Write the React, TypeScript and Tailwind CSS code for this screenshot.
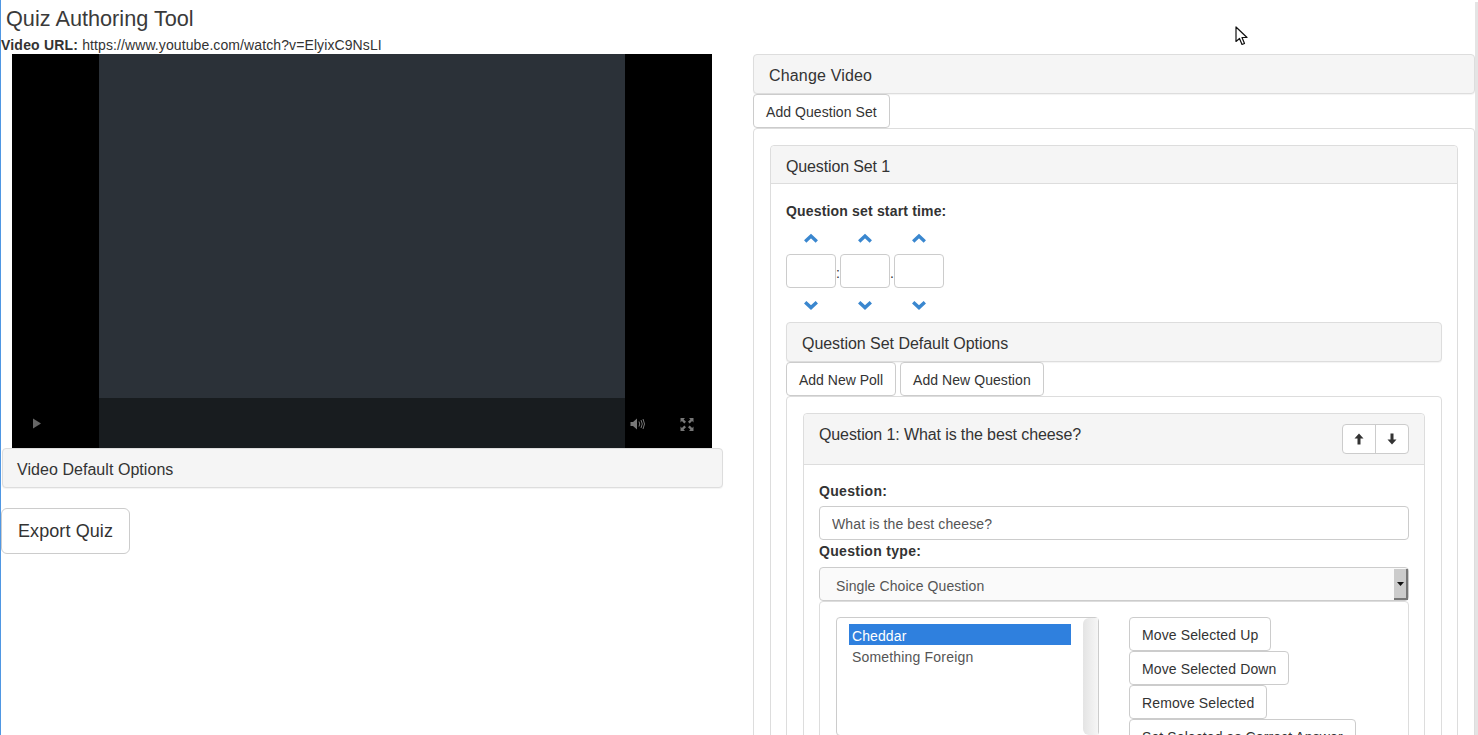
import React from 'react';

function Btn({ children, className = '' }: { children: React.ReactNode; className?: string }) {
  return (
    <button className={`h-[34px] px-3 pt-[2px] bg-white border border-[#ccc] rounded text-[14px] text-[#333] whitespace-nowrap shrink-0 ${className}`}>
      {children}
    </button>
  );
}

function PanelBar({ title, className = '' }: { title: string; className?: string }) {
  return (
    <div className={`h-10 flex items-center pt-1 bg-[#f5f5f5] border border-[#ddd] rounded text-[16px] text-[#333] shadow-[0_1px_1px_rgba(0,0,0,0.05)] ${className}`}>
      {title}
    </div>
  );
}

function Chevron({ up }: { up?: boolean }) {
  return (
    <svg width="14" height="10" viewBox="0 0 14 10" className="text-[#3a87cf]">
      <path d={up ? 'M1.2 8.4 L7 3 L12.8 8.4' : 'M1.2 2.2 L7 7.6 L12.8 2.2'} fill="none" stroke="currentColor" strokeWidth="3.4" />
    </svg>
  );
}

function TimeField() {
  return (
    <div className="w-[50px] flex flex-col items-center">
      <div className="h-[21px] flex items-center justify-center"><Chevron up /></div>
      <input readOnly className="w-[50px] h-[34px] mt-[6px] border border-[#ccc] rounded bg-white" />
      <div className="h-[21px] mt-[6px] flex items-center justify-center"><Chevron /></div>
    </div>
  );
}

function ArrowIcon({ up }: { up?: boolean }) {
  return (
    <svg width="10" height="12" viewBox="0 0 10 12" className="text-[#333]">
      <path d={up ? 'M5 0.5 L9.5 5.5 H6.5 V11.5 H3.5 V5.5 H0.5 Z' : 'M5 11.5 L9.5 6.5 H6.5 V0.5 H3.5 V6.5 H0.5 Z'} fill="currentColor" />
    </svg>
  );
}

function VideoPlayer() {
  return (
    <div className="ml-[11px] w-[700px] h-[394px] bg-black flex">
      <div className="w-[87px] flex items-end">
        <svg width="10" height="11" viewBox="0 0 10 11" className="ml-5 mb-[19px]"><path d="M1 0.5 L9 5.5 L1 10.5 Z" fill="#666" /></svg>
      </div>
      <div className="w-[526px] flex flex-col">
        <div className="h-[344px] bg-[#2b3138]" />
        <div className="h-[50px] bg-[#181c1f]" />
      </div>
      <div className="w-[87px] flex items-end">
        <svg width="16" height="12" viewBox="0 0 16 12" className="ml-[5px] mb-[18px]">
          <path d="M0.5 4 H3 L7 0.5 V11.5 L3 8 H0.5 Z" fill="#777" />
          <path d="M9 3.5 Q10.5 6 9 8.5 M11 2 Q13.5 6 11 10 M13 1 Q16 6 13 11" fill="none" stroke="#777" strokeWidth="1" />
        </svg>
        <svg width="14" height="15" viewBox="0 0 14 14" className="ml-[34px] mb-[16px]">
          <path d="M0.5 0.5 H5 L3.6 1.9 L6 4.3 L4.3 6 L1.9 3.6 L0.5 5 Z M13.5 0.5 V5 L12.1 3.6 L9.7 6 L8 4.3 L10.4 1.9 L9 0.5 Z M0.5 13.5 V9 L1.9 10.4 L4.3 8 L6 9.7 L3.6 12.1 L5 13.5 Z M13.5 13.5 H9 L10.4 12.1 L8 9.7 L9.7 8 L12.1 10.4 L13.5 9 Z" fill="#777" />
        </svg>
      </div>
    </div>
  );
}

export default function App() {
  return (
    <div className="relative h-[735px] overflow-hidden bg-white text-[#333] text-[14px] border-l border-[#4f97e3] font-['Liberation_Sans',Arial,sans-serif]">
      {/* Header */}
      <div className="h-[37px] pl-[5px] pt-[6px] text-[21.7px] leading-[26px] text-[#3a3a3a]">Quiz Authoring Tool</div>
      <div className="h-[17px] leading-[17px] tracking-[0.1px]"><b className="tracking-[0.2px]">Video URL:</b> https://www.youtube.com/watch?v=ElyixC9NsLI</div>

      <div className="flex">
        {/* Left column */}
        <div className="w-[752px] shrink-0">
          <VideoPlayer />
          <PanelBar title="Video Default Options" className="ml-px w-[721px] pl-[14px] tracking-[0.05px]" />
          <button className="mt-5 h-[46px] w-[129px] bg-white border border-[#ccc] rounded-md text-[18px] text-[#333] tracking-[0.1px]">Export Quiz</button>
        </div>

        {/* Right column */}
        <div className="w-[722px] shrink-0">
          <PanelBar title="Change Video" className="pl-[15px] tracking-[0.17px]" />
          <Btn className="tracking-[0.06px]">Add Question Set</Btn>
          <div className="border border-[#ddd] rounded p-4">
            <div className="border border-[#ddd] rounded">
              <div className="h-[38px] flex items-center pt-1 px-[15px] bg-[#f5f5f5] border-b border-[#ddd] text-[16px] rounded-t tracking-[-0.14px]">Question Set 1</div>
              <div className="p-[15px]">
                <div className="font-bold leading-[20px] mt-[2px] tracking-[0.17px]">Question set start time:</div>
                <div className="flex items-start mt-[6px] h-[95px]">
                  <TimeField />
                  <span className="w-1 flex justify-center mt-[36px]">:</span>
                  <TimeField />
                  <span className="w-1 flex justify-center mt-[36px]">.</span>
                  <TimeField />
                </div>
                <PanelBar title="Question Set Default Options" className="pl-[15px] tracking-[-0.04px]" />
                <div className="flex gap-1">
                  <Btn>Add New Poll</Btn>
                  <Btn className="tracking-[0.06px]">Add New Question</Btn>
                </div>
                <div className="border border-[#ddd] rounded p-4">
                  <div className="border border-[#ddd] rounded">
                    <div className="h-[51px] flex justify-between px-[15px] pt-[11px] bg-[#f5f5f5] border-b border-[#ddd] text-[16px] leading-[20px] rounded-t">
                      <span className="tracking-[-0.11px]">Question 1: What is the best cheese?</span>
                      <div className="flex h-[30px] -mt-px border border-[#ccc] rounded bg-white">
                        <div className="w-[33px] flex items-center justify-center border-r border-[#ccc]"><ArrowIcon up /></div>
                        <div className="w-[32px] flex items-center justify-center"><ArrowIcon /></div>
                      </div>
                    </div>
                    <div className="p-[15px]">
                      <div className="font-bold leading-[20px] mt-[1px] tracking-[0.33px]">Question:</div>
                      <input readOnly value="What is the best cheese?" className="block w-full h-[34px] mt-[5px] px-3 pt-px border border-[#ccc] rounded text-[#555] tracking-[0.12px]" />
                      <div className="font-bold leading-[20px] mt-[1px] tracking-[0.3px]">Question type:</div>
                      <div className="relative h-[34px] mt-[6px] border border-[#ccc] rounded bg-[#fafafa] text-[#555] pl-4 pt-2 leading-[20px] tracking-[0.09px]">
                        Single Choice Question
                        <div className="absolute right-0 top-[1px] bottom-0 w-[14px] bg-[#ccc] border-r-2 border-b-2 border-[#777] flex items-center justify-center">
                          <svg width="7" height="4" viewBox="0 0 7 4"><path d="M0 0 H7 L3.5 4 Z" fill="#111" /></svg>
                        </div>
                      </div>
                      <div className="border border-[#ddd] rounded px-4 pt-[15px] flex h-[300px]">
                        <div className="relative w-[263px] h-[119px] border border-[#ccc] rounded pl-3 pt-[6px] text-[#555] shrink-0">
                          <div className="w-[222px] h-[21px] bg-[#2f80de] text-white pl-[3px] leading-[25px] tracking-[0.1px]">Cheddar</div>
                          <div className="pl-[3px] leading-[25px] tracking-[0.18px]">Something Foreign</div>
                          <div className="absolute right-0 top-0 bottom-0 w-[15px] bg-gradient-to-r from-[#e4e4e4] to-[#f6f6f6] rounded-l-md" />
                        </div>
                        <div className="ml-[30px] flex flex-col items-start">
                          <Btn className="tracking-[0.12px]">Move Selected Up</Btn>
                          <Btn className="tracking-[0.12px]">Move Selected Down</Btn>
                          <Btn className="tracking-[0.12px]">Remove Selected</Btn>
                          <Btn className="tracking-[0.1px]">Set Selected as Correct Answer</Btn>
                        </div>
                      </div>
                    </div>
                  </div>
                </div>
              </div>
            </div>
          </div>
        </div>
      </div>

      {/* Page edge */}
      <div className="absolute right-0 top-[2px] bottom-0 w-[3px] bg-[#e4e4e4]" />

      {/* Mouse cursor from the capture */}
      <svg width="14" height="20" viewBox="0 0 14 20" className="absolute left-[1234px] top-[26px]">
        <path d="M1 1 V15.5 L4.5 12.5 L7 18.5 L9.5 17.5 L7 11.5 H12 Z" fill="#fff" stroke="#111" strokeWidth="1.2" strokeLinejoin="round" />
      </svg>
    </div>
  );
}
